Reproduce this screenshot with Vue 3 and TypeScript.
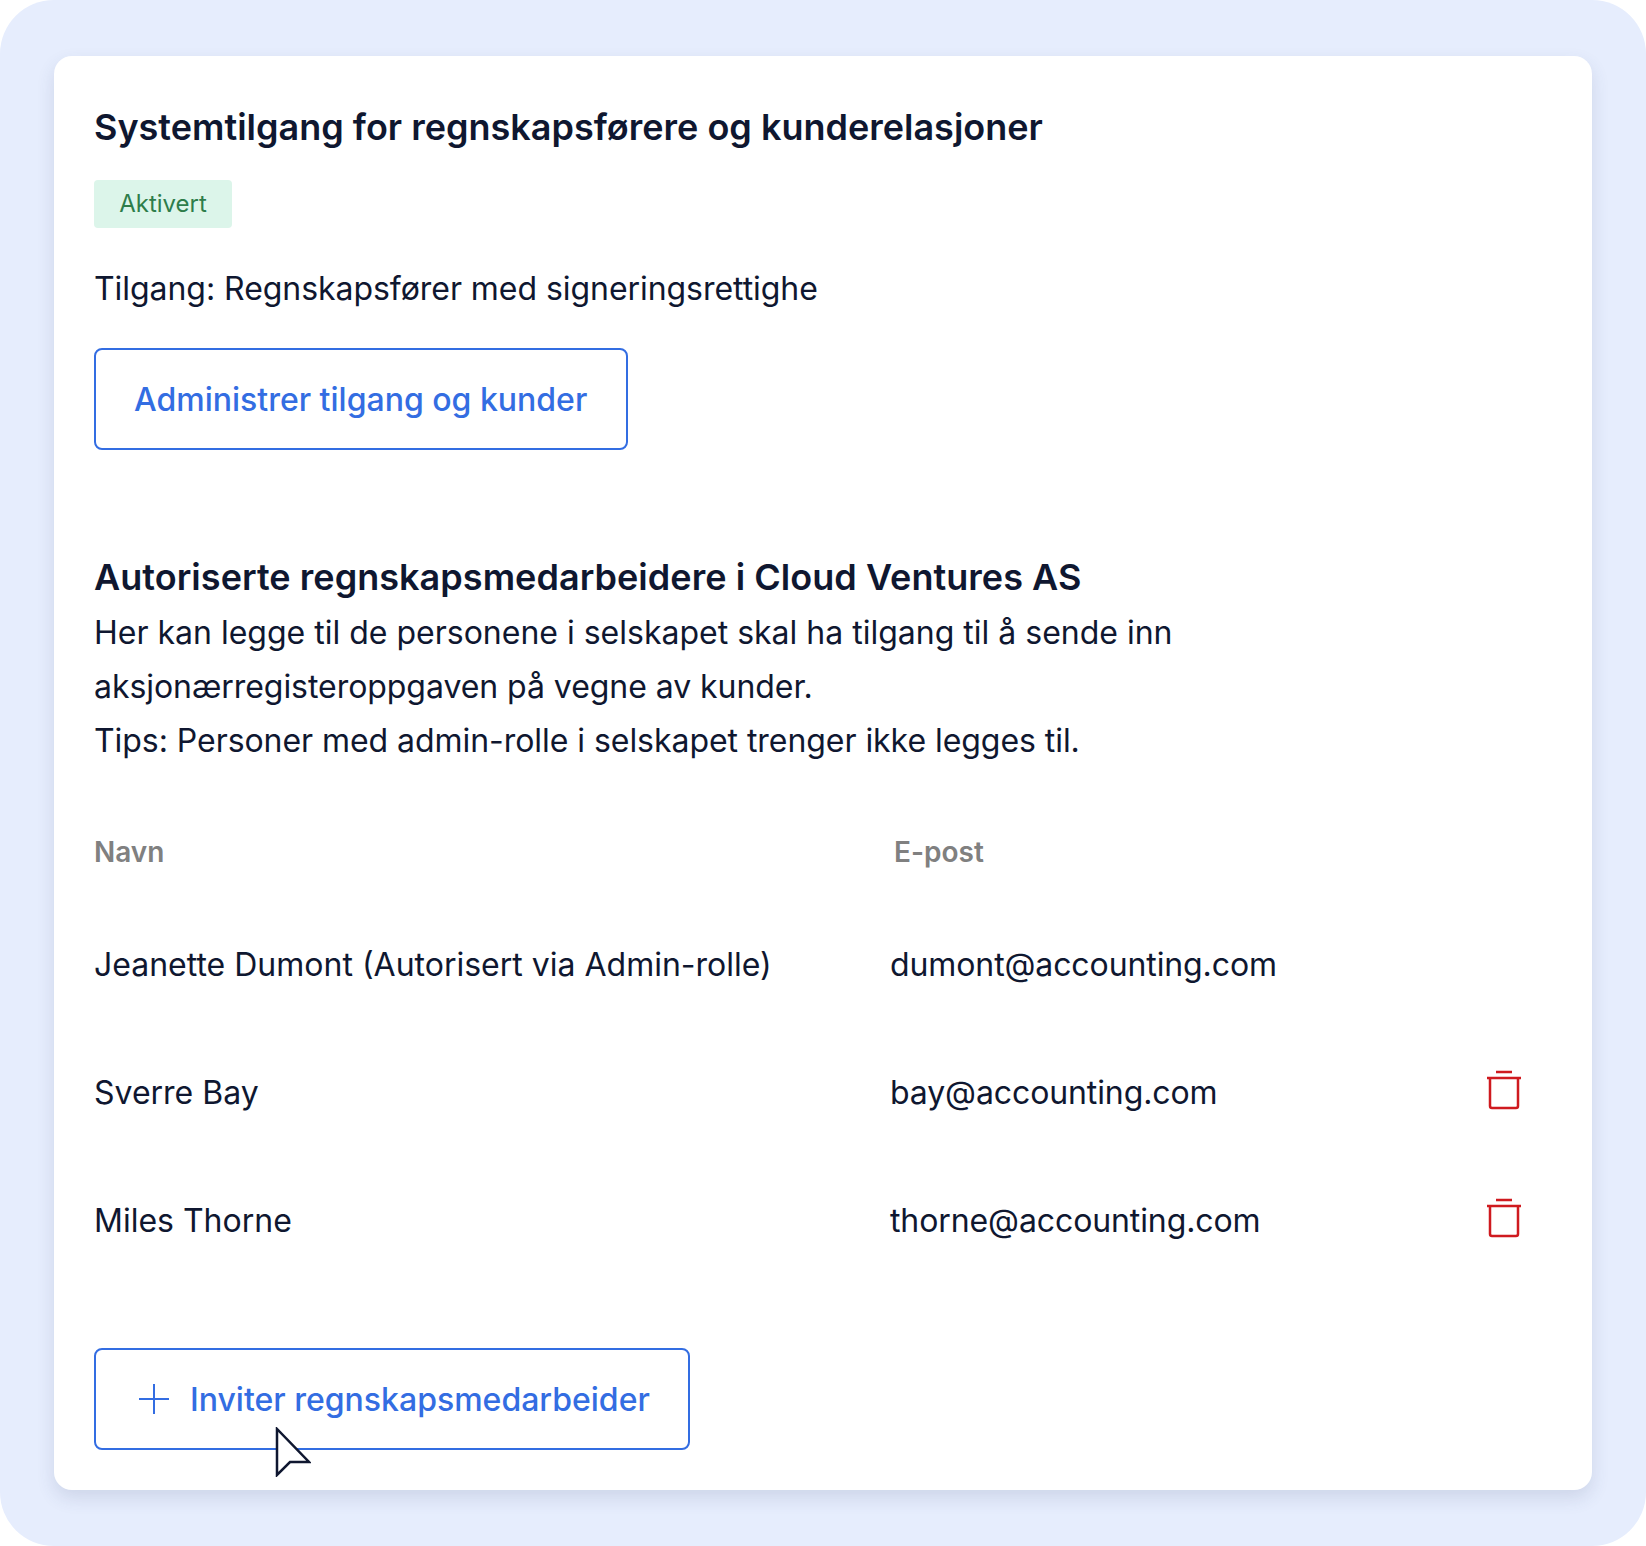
<template>
  <div class="frame">
    <section class="card">
      <h1 class="title">Systemtilgang for regnskapsførere og kunderelasjoner</h1>
      <span class="badge">Aktivert</span>
      <p class="access">Tilgang: Regnskapsfører med signeringsrettighe</p>
      <button class="btn btn--manage" type="button">Administrer tilgang og kunder</button>

      <h2 class="subtitle">Autoriserte regnskapsmedarbeidere i Cloud Ventures AS</h2>
      <p class="desc">
        Her kan legge til de personene i selskapet skal ha tilgang til å sende inn<br />
        <span class="desc__tight">aksjonærregisteroppgaven på vegne av kunder.</span><br />
        <span class="desc__tight">Tips: Personer med admin-rolle i selskapet trenger ikke legges til.</span>
      </p>

      <div class="table">
        <div class="thead">
          <span>Navn</span>
          <span class="thead__mail">E-post</span>
        </div>
        <div v-for="row in rows" :key="row.email" class="row">
          <span>{{ row.name }}</span>
          <span class="row__mail">{{ row.email }}</span>
          <svg v-if="row.removable" class="trash" viewBox="0 0 36 40" fill="none" aria-hidden="true">
            <path d="M10 2h16M1 8h34" />
            <path d="M4 8v28a2 2 0 0 0 2 2h24a2 2 0 0 0 2-2V8" />
          </svg>
        </div>
      </div>

      <div class="invite">
        <button class="btn btn--invite" type="button">
          <svg class="plus" viewBox="0 0 30 30" fill="none" aria-hidden="true">
            <path d="M15 0v30M0 15h30" />
          </svg>
          Inviter regnskapsmedarbeider
        </button>
        <svg class="cursor" viewBox="0 0 36 50" aria-hidden="true">
          <path d="M2 2v46l13-13h19z" />
        </svg>
      </div>
    </section>
  </div>
</template>

<script setup lang="ts">
interface Row {
  name: string
  email: string
  removable: boolean
}

const rows: Row[] = [
  { name: 'Jeanette Dumont (Autorisert via Admin-rolle)', email: 'dumont@accounting.com', removable: false },
  { name: 'Sverre Bay', email: 'bay@accounting.com', removable: true },
  { name: 'Miles Thorne', email: 'thorne@accounting.com', removable: true },
]
</script>

<style>
html,
body {
  background: #fff;
}
</style>

<style scoped>
.frame {
  box-sizing: border-box;
  width: 1646px;
  height: 1546px;
  padding: 56px 54px;
  background: #e6edfd;
  border-radius: 54px;
  font-family: Inter, "Liberation Sans", sans-serif;
  color: #0f1730;
}

.card {
  box-sizing: border-box;
  height: 1434px;
  padding: 50px 40px 0;
  background: #fff;
  border-radius: 18px;
  box-shadow: 0 8px 18px rgba(60, 70, 110, 0.14);
}

.title {
  margin: 0;
  font-size: 36px;
  line-height: 42px;
  font-weight: 600;
}

.badge {
  display: block;
  width: 138px;
  height: 48px;
  margin-top: 32px;
  background: #dcf5ea;
  border-radius: 4px;
  color: #2e7d4a;
  font-size: 24px;
  line-height: 48px;
  text-align: center;
}

.access {
  margin: 34px 0 0;
  font-size: 32px;
  line-height: 54px;
  letter-spacing: -0.05px;
}

.btn {
  display: flex;
  align-items: center;
  box-sizing: border-box;
  height: 102px;
  background: #fff;
  border: 2px solid #336de2;
  border-radius: 8px;
  color: #336de2;
  font-family: inherit;
  font-size: 32px;
  font-weight: 500;
  white-space: nowrap;
}

.btn--manage {
  width: 534px;
  margin-top: 32px;
  padding: 0 38px;
}

.subtitle {
  margin: 106px 0 0;
  font-size: 36px;
  line-height: 42px;
  font-weight: 600;
  letter-spacing: 0.04px;
}

.desc {
  margin: 8px 0 0;
  font-size: 32px;
  line-height: 54px;
}

.desc__tight {
  letter-spacing: -0.05px;
}

.table {
  margin-top: 67px;
}

.thead {
  display: grid;
  grid-template-columns: 796px 1fr;
  font-size: 28px;
  line-height: 34px;
  font-weight: 600;
  color: #808080;
}

.thead__mail {
  padding-left: 4px;
}

.row {
  display: grid;
  grid-template-columns: 796px 1fr 40px;
  align-items: center;
  height: 128px;
  padding-right: 26px;
  font-size: 32px;
}

.thead + .row {
  margin-top: 31px;
}

.row__mail {
  letter-spacing: -0.1px;
}

.trash {
  width: 36px;
  height: 40px;
  margin-bottom: 4px;
  stroke: #cf1a1f;
  stroke-width: 2.5;
}

.invite {
  position: relative;
  width: 596px;
  margin-top: 64px;
}

.btn--invite {
  width: 596px;
  padding: 0 0 0 43px;
  gap: 21px;
}

.plus {
  width: 30px;
  height: 30px;
  stroke: #336de2;
  stroke-width: 2;
}

.cursor {
  position: absolute;
  left: 181px;
  top: 79px;
  width: 36px;
  height: 50px;
  fill: #fff;
  stroke: #0f1730;
  stroke-width: 2.5;
}
</style>
